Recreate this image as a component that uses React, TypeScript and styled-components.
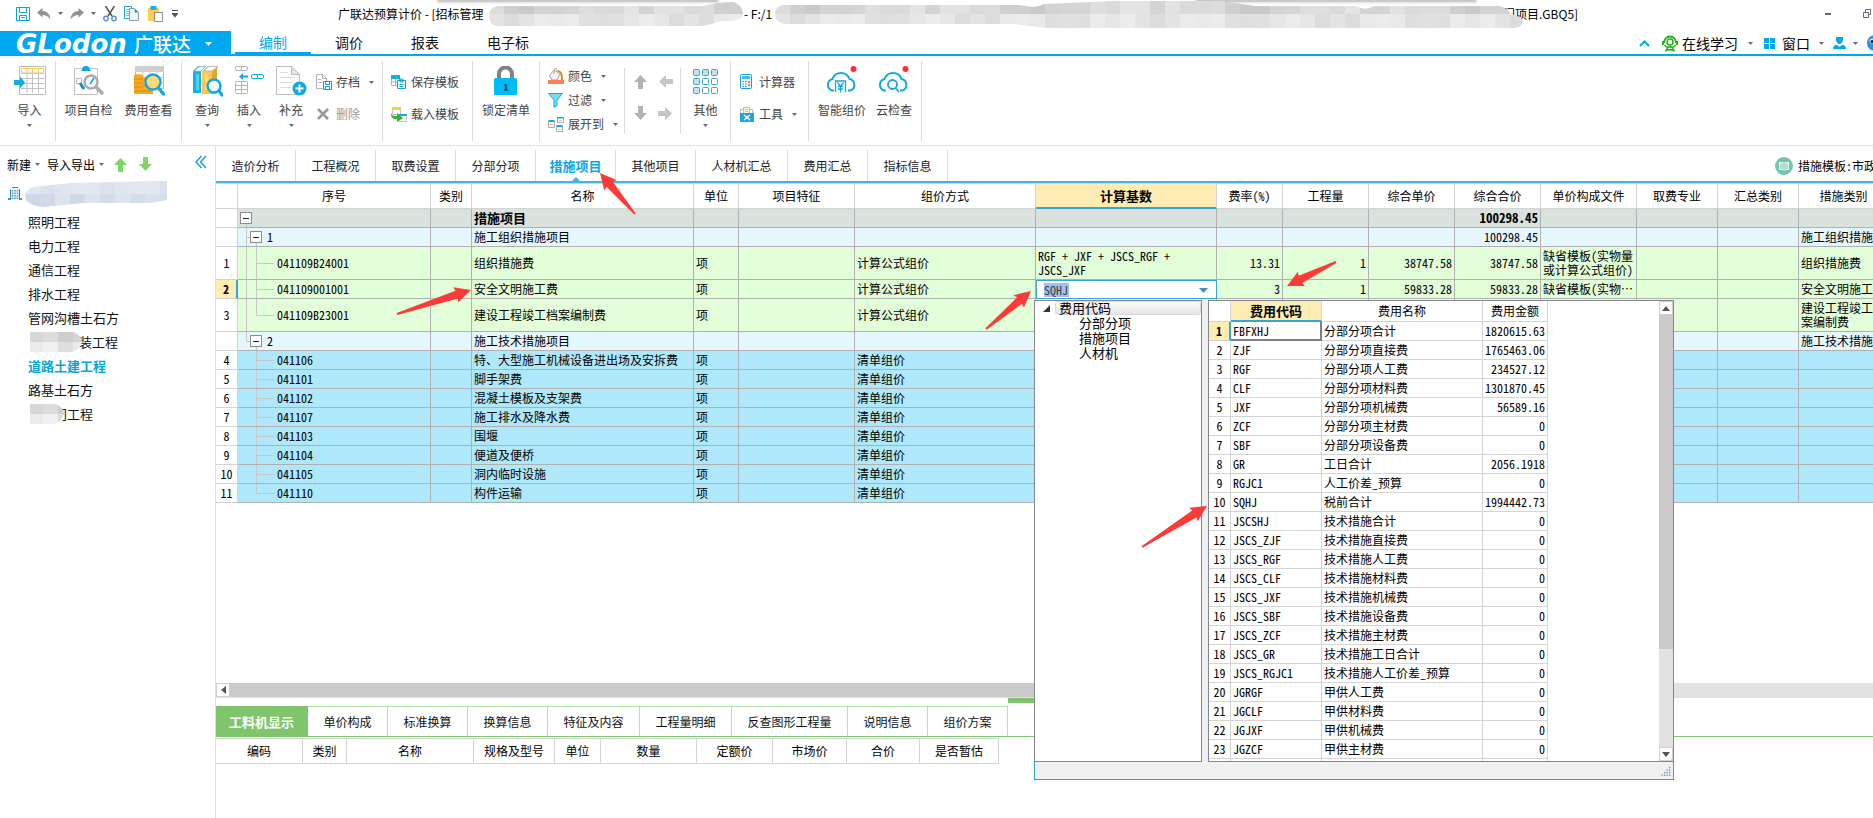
import React from 'react';
import styled, { createGlobalStyle, css } from 'styled-components';

const SANS = '"Noto Sans CJK SC", "Noto Sans", sans-serif';
const MONO = '"Noto Sans Mono CJK SC", "Liberation Mono", "Noto Sans CJK SC", monospace';
const BLUE = '#00a8f0';
const LINE = '#d4d4d4';

const GlobalStyle = createGlobalStyle`
  * { box-sizing: border-box; }
  html, body, #root { height: 100%; margin: 0; }
  body { background: #fff; overflow: hidden; font: 12px/16px ${SANS}; color: #000; }
  button { font: inherit; color: inherit; background: none; border: 0; padding: 0; margin: 0; cursor: pointer; }
  svg { display: block; flex: none; }
`;

const Shell = styled.div`
  position: relative;
  display: flex;
  flex-direction: column;
  min-height: 100vh;
  overflow: hidden;
`;

/* ---------- small drawings ---------- */

const Caret = ({ color = '#6a6a78' }: { color?: string }) => (
  <svg width="5" height="3" viewBox="0 0 5 3"><path d="M0 0h5L2.5 3z" fill={color} /></svg>
);

const SaveIcon = () => (
  <svg width="14" height="14" viewBox="0 0 14 14" fill="none" stroke="#0aa6d6">
    <path d="M.5.5h13v13H.5z" /><path d="M3.500.500v5h7v-5" /><path d="M3.500 13.500v-5h7v5M5 10.500h4" />
  </svg>
);
const UndoIcon = ({ flip }: { flip?: boolean }) => (
  <svg width="14" height="12" viewBox="0 0 14 12"><path transform={flip ? 'translate(14 0) scale(-1 1)' : undefined} d="M0 4.500 5.500 0v3C10 3 13 6 13.500 11.500 11.500 8.500 9 7 5.500 7v2.500z" fill="#8e9196" /></svg>
);
const CutIcon = () => (
  <svg width="14" height="16" viewBox="0 0 14 16" fill="none">
    <path d="M2.500 0 9 10M11.500 0 5 10" stroke="#55585e" strokeWidth="1.600" />
    <circle cx="3" cy="12.500" r="2.200" stroke="#5c8fc0" strokeWidth="1.400" /><circle cx="11" cy="12.500" r="2.200" stroke="#5c8fc0" strokeWidth="1.400" />
  </svg>
);
const CopyIcon = () => (
  <svg width="15" height="15" viewBox="0 0 15 15" fill="none">
    <path d="M.5.500h7v12h-7z" fill="#fff" stroke="#1aa6d4" /><path d="M2 3.500h4M2 5.500h3M2 7.500h3M2 9.500h3" stroke="#aaa" />
    <path d="M5.500 2.500h5l4 4v8h-9z" fill="#eef9fd" stroke="#9a9a9a" /><path d="M10.500 2.500v4h4z" fill="#1aa6d4" />
  </svg>
);
const PasteIcon = () => (
  <svg width="15" height="16" viewBox="0 0 15 16"><path d="M0 2h11v13H0z" fill="#ffcc4d" /><path d="M2.500 0h6v4h-6z" fill="#16b0dc" /><path d="M6.500 6.500h8v9h-8z" fill="#fff" stroke="#8b8b8b" /></svg>
);
const MenuMoreIcon = () => (
  <svg width="6" height="8" viewBox="0 0 6 8"><path d="M0 .500h6" stroke="#555" /><path d="M0 3h6v1L3 7.500 0 4z" fill="#555" /></svg>
);

const ImportIcon = () => (
  <svg width="32" height="29" viewBox="0 0 32 29" fill="none">
    <path d="M5.500.500h26v28h-26z" fill="#fff" stroke="#bbb" />
    <path d="M7 7h23M7 12.500h23M7 17.500h23M7 22.500h23M13 7v20M18.500 7v20M24.500 7v20" stroke="#c2c2c2" />
    <path d="M7.500 2.500h22v5h-22zM13 2.500v5M18.500 2.500v5M24.500 2.500v5" stroke="#ffc84a" />
    <path d="M0 14h6v-3.500l5 6-5 6V19H0z" fill="#13a9e0" />
  </svg>
);
const InspectIcon = () => (
  <svg width="32" height="30" viewBox="0 0 32 30" fill="none">
    <path d="M1.500 2.500h23v26h-23z" fill="#fff" stroke="#c2c2c2" /><path d="M9 4a4 4 0 0 1 8 0zM8 4h10v1H8z" fill="#13a9e0" />
    <path d="M3.500 12.500h5v5h-5z" stroke="#bbb" /><path d="m7 17 4 6" stroke="#1b8cc8" strokeWidth="3" />
    <circle cx="18" cy="16" r="6.500" fill="#f4f8fa" stroke="#a9abae" strokeWidth="2.400" /><path d="m23 21 6 6" stroke="#a9abae" strokeWidth="3.500" strokeLinecap="round" /><path d="m17 18 4-6" stroke="#13a9e0" strokeWidth="1.500" />
  </svg>
);
const CostIcon = () => (
  <svg width="32" height="30" viewBox="0 0 32 30" fill="none">
    <path d="M2.500.500h28v22h-28z" fill="#fff" stroke="#bbb" /><path d="M2 0h29v6H2z" fill="#cfcfcf" /><path d="M3 11.500h27M3 17h27M10 6v17M17 6v17M24 6v17" stroke="#c9c9c9" />
    <path d="M1 9c0-1 8-1 9 0v2h6l4 12v5H1z" fill="#f7a922" /><path d="M1 13h9M1 17h9M1 21h9M1 25h18M10 15h6M10 20h7" stroke="#d98a12" />
    <circle cx="20" cy="16" r="7.500" fill="#ffd97a" stroke="#13a9e0" strokeWidth="2.400" /><path d="m25.500 22 5 6" stroke="#13a9e0" strokeWidth="3.500" strokeLinecap="round" />
  </svg>
);
const QueryIcon = () => (
  <svg width="31" height="31" viewBox="0 0 31 31" fill="none">
    <path d="M1 5 6 0h8L9 5v22H1z" fill="#13b4e4" /><path d="M2.500 5 7 .500h6L9 5z" fill="#fff" stroke="#9bb" /><path d="M4 8h3v16H4z" fill="#55cdf0" />
    <path d="M10 5 16 0h10l-1 5v23H10z" fill="#ffc84a" /><path d="M11.500 5 17 .500h9L20 5z" fill="#fff" stroke="#bbb" /><path d="M13 8h3v16h-3z" fill="#ffdd88" /><path d="m20 6 5-4v12l-5 2z" fill="#e6a52d" />
    <circle cx="22" cy="20" r="6.500" fill="#f5fafc" stroke="#13a9e0" strokeWidth="2.400" /><path d="m27 25 3 4" stroke="#13a9e0" strokeWidth="3.200" strokeLinecap="round" />
  </svg>
);
const InsertIcon = () => (
  <svg width="29" height="29" viewBox="0 0 29 29" fill="none">
    <rect x=".5" y=".5" width="12" height="4" rx="1.500" stroke="#b4b4b4" /><path d="M6.500.500v4" stroke="#b4b4b4" />
    <rect x="16.500" y="8.500" width="12" height="4" rx="1.500" stroke="#13a9e0" /><path d="M22.500 8.500v4" stroke="#13a9e0" />
    <path d="M13 9.500H8V7l-4 3.500L8 14v-2.500h5z" fill="#13a9e0" />
    <rect x=".5" y="15.500" width="12" height="12" rx="1" stroke="#b4b4b4" /><path d="M6.500 15.500v12M.500 19.500h12M.500 23.500h12" stroke="#b4b4b4" />
  </svg>
);
const SupplementIcon = () => (
  <svg width="31" height="30" viewBox="0 0 31 30" fill="none">
    <path d="M.500.500h15l8 8v20H.500z" fill="#fff" stroke="#bcbcbc" /><path d="M15.500.500v8h8z" fill="#e4e4e4" stroke="#bcbcbc" /><path d="M4 6.500h8M4 11.500h15M4 16.500h13M4 21.500h11" stroke="#dcdcdc" />
    <circle cx="23.500" cy="22.500" r="7" fill="#13a9e0" /><path d="M23.500 18.500v8M19.500 22.500h8" stroke="#fff" strokeWidth="2" />
  </svg>
);
const ArchiveIcon = () => (
  <svg width="16" height="16" viewBox="0 0 16 16" fill="none">
    <path d="M.500.500h6l4 4v10H.500z" fill="#fff" stroke="#b4b4b4" /><path d="M6.500.500v4h4M2 5.500h3M2 8.500h4" stroke="#b4b4b4" />
    <path d="M7.500 7.500h8v8h-8z" fill="#fff" stroke="#0ea0d0" /><path d="M9.500 7.500v3h4v-3M9.500 15.500v-3h4v3" stroke="#0ea0d0" />
  </svg>
);
const DeleteIcon = () => (
  <svg width="14" height="12" viewBox="0 0 14 12"><path d="m2 1 10 10M12 1 2 11" stroke="#9b9b9b" strokeWidth="2.600" /></svg>
);
const SaveTplIcon = () => (
  <svg width="15" height="14" viewBox="0 0 15 14" fill="none">
    <path d="M.500.500h8v10h-8zM4.500 3v8M.500 7h8" stroke="#b4b4b4" /><path d="M0 0h9v4H0z" fill="#13b0e0" /><path d="M6.500 5.500h8v8h-8z" fill="#fff" stroke="#0ea0d0" /><path d="M9 4h3v3H9zM8.500 9.500h4M8.500 11.500h4" stroke="#0ea0d0" />
  </svg>
);
const LoadTplIcon = () => (
  <svg width="16" height="15" viewBox="0 0 16 15" fill="none">
    <path d="M1.500.500h8v7h-8z" fill="#fff" stroke="#c4c4c4" /><path d="M1 0h9v3H1z" fill="#ffc84a" /><path d="M7.500 7.500h8v7h-8z" fill="#fff" stroke="#c4c4c4" /><path d="M7 7h9v2H7z" fill="#13a9e0" />
    <path d="M0 5C0 9 3 9 6 9V6l6 5-6 4v-2.500C1 12.500-.500 10 0 5z" fill="#3cb034" />
  </svg>
);
const LockIcon = () => (
  <svg width="24" height="29" viewBox="0 0 24 29" fill="none">
    <path d="M5 13V8a6.500 6.500 0 0 1 13 0v5" stroke="#808088" strokeWidth="4" /><rect x="0" y="12" width="23" height="17" rx="1.500" fill="#00bbf4" /><path d="M10 18h3v5h1v2h-4v-2h1v-3h-1z" fill="#1a5f86" />
  </svg>
);
const ColorIcon = () => (
  <svg width="16" height="16" viewBox="0 0 16 16" fill="none"><path d="m6 2 6 4-3 6H4L1.500 7.500z" fill="#f7f7f7" stroke="#a2a2a2" /><path d="M6 6V1.500C6 0 9 0 9 1.500V4" stroke="#a2a2a2" /><path d="M10 3c3 0 4 3 4 9" stroke="#e8891f" strokeWidth="2" /><path d="M0 12h16v4H0z" fill="#ff7f50" /></svg>
);
const FilterIcon = () => (
  <svg width="15" height="15" viewBox="0 0 15 15"><path d="M.500.500h14L9 7v5.500L6 14.500V7z" fill="#7fd6f5" stroke="#13a9e0" /></svg>
);
const ExpandIcon = () => (
  <svg width="16" height="15" viewBox="0 0 16 15" fill="none"><path d="M.500 4.500h6v6h-6zM9.500.500h6v5h-6zM8.500 9.500h6v5h-6z" fill="#fff" stroke="#aaa" /><path d="M.500 4h6M9.500.500h6M8.500 9h6" stroke="#13a9e0" strokeWidth="2" /><path d="M2 7.500h3M11 3.500h3M10 12.500h3" stroke="#e4c48a" /></svg>
);
const dirs = { up: 0, right: 90, down: 180, left: 270 };
const ArrowIcon = ({ dir, color = '#b4b4b4' }: { dir: keyof typeof dirs; color?: string }) => (
  <svg width="15" height="15" viewBox="0 0 15 15"><path transform={`rotate(${dirs[dir]} 7.5 7.5)`} d="M7.500 1 14 8h-4v7H5V8H1z" fill={color} /></svg>
);
const OtherIcon = () => (
  <svg width="25" height="28" viewBox="0 -3 25 28" stroke="#35a3cf">
    {[0, 1, 2].map(r => [0, 1, 2].map(c => (
      <rect key={`${r}${c}`} x={c * 9 + 0.5} y={r * 9 + 0.5} width="6" height="6" rx="1" fill={r === 0 || c === 0 ? '#c2e2f4' : '#fff'} />
    )))}
  </svg>
);
const CalcIcon = () => (
  <svg width="13" height="16" viewBox="0 0 13 16" fill="none"><rect x=".5" y=".5" width="11" height="14" rx="1" fill="#e8f6fc" stroke="#1f9ad6" /><path d="M2 2h8v3H2z" fill="#49b8ea" /><path d="M2.500 7.500h5M2.500 10h5M2.500 12.500h5" stroke="#1f9ad6" strokeDasharray="1.500 1" /><path d="M9 7v6" stroke="#ee5544" strokeWidth="1.500" strokeDasharray="2 1" /></svg>
);
const ToolIcon = () => (
  <svg width="14" height="15" viewBox="0 0 14 15" fill="none"><path d="M.500 2.500h12v5h-12z" fill="#fff" stroke="#bbb" /><path d="M3.500.500h6v6h-6z" fill="#fff6d8" stroke="#f0b93a" /><path d="M5 2.500h3M5 4.500h3" stroke="#f0b93a" /><path d="M0 6h14v9H0z" fill="#1fa3e4" /><path d="m4 8 6 5M10 8l-6 5" stroke="#fff" strokeWidth="1.500" /></svg>
);
const CloudIcon = ({ search }: { search?: boolean }) => (
  <svg width="33" height="30" viewBox="0 0 33 30" fill="none">
    <path d="M8 24.500H6A6 6 0 0 1 6.500 13 9 9 0 0 1 23.500 13 6 6 0 0 1 24.500 24.500H22" stroke="#13a9e0" strokeWidth="2" />
    {search ? (
      <g stroke="#13a9e0" strokeWidth="1.800"><circle cx="14.500" cy="18.500" r="4.500" /><path d="m17.500 22 3.500 4" /></g>
    ) : (
      <g stroke="#13a9e0" strokeWidth="1.300"><path d="M9.500 26v-11h10v11" /><path d="m11.500 16.500 3 4 3-4M14.500 20.500v6M12 20.500h5M12 23h5" /></g>
    )}
    <circle cx="27.500" cy="3" r="3" fill="#ff2d2d" />
  </svg>
);
const HeadsetIcon = () => (
  <svg width="16" height="17" viewBox="0 0 16 17" fill="none" stroke="#22b11a"><path d="M2 8a6 6.500 0 0 1 12 0" strokeWidth="1.800" /><path d="M1 6v4M15 6v4" strokeWidth="2" /><circle cx="8" cy="7" r="3" strokeWidth="1.500" /><path d="M2.500 10c1 2 3 3 5.500 1.500 2.500 1.500 4.500.500 5.500-1.500M6 12l-2 3.500 4-1 4 1-2-3.500" strokeWidth="1.500" /></svg>
);
const WindowsIcon = () => (
  <svg width="11" height="11" viewBox="0 0 11 11"><path d="M0 0h5v5H0zM6 0h5v5H6zM0 6h5v5H0zM6 6h5v5H6z" fill={BLUE} /></svg>
);
const UserIcon = () => (
  <svg width="13" height="12" viewBox="0 0 13 12" fill={BLUE}><path d="M3 0h7v3c0 2-2 4-3.500 4S3 5 3 3z" /><path d="M0 12c0-4 3-4 4-4l2.500 2L9 8c1 0 4 0 4 4z" /></svg>
);
const BirdIcon = () => (
  <svg width="16" height="16" viewBox="0 0 16 16"><circle cx="8" cy="8" r="8" fill="#2f8fe0" /><circle cx="5" cy="6" r="2.500" fill="#cfe8fa" /><circle cx="5" cy="6.500" r="1.500" fill="#222" /><path d="m8 8 4 2-3 3z" fill="#ffc23c" /></svg>
);
const BookIcon = () => (
  <svg width="18" height="18" viewBox="0 0 18 18"><circle cx="9" cy="9" r="9" fill="#74c5b0" /><path d="M4 5h4l1 1 1-1h4v8h-4l-1 1-1-1H4z" fill="#e9f7f3" /><path d="M5 7h3M5 9h3M5 11h3M10 7h3M10 9h3M10 11h3M9 6v7" stroke="#74c5b0" /></svg>
);
const BuildingIcon = () => (
  <svg width="14" height="14" viewBox="0 0 14 14" fill="none">
    <path d="M4 .500h6M2.500 13V2.500h9V13" stroke="#3d7fb4" /><path d="M3 2h8v11H3z" fill="#eaf6fd" />
    <path d="M4.500 3v9M7 3v9M9.500 3v9" stroke="#39a0dc" strokeWidth="1.500" strokeDasharray="1.500 1" /><path d="M0 11h2v2H0zM12 11h2v2h-2z" fill="#4cae3a" />
  </svg>
);
const CollapseIcon = () => (
  <svg width="12" height="14" viewBox="0 0 12 14" fill="none" stroke="#16a0c8" strokeWidth="1.400"><path d="M6.500 1 1 7l5.500 6M11 1 5.500 7l5.500 6" /></svg>
);

/* ---------- title bar ---------- */

const TitleBar = styled.header`
  display: flex;
  align-items: center;
  height: 31px;
  padding: 0 2px 4px 16px;
`;
const QuickAccess = styled.div`
  display: flex;
  align-items: center;
  width: 322px;
  gap: 7px;
`;
const IconButton = styled.button<{ $ml?: number }>`
  margin-left: ${p => p.$ml ?? 0}px;
`;
const TitleText = styled.div<{ $w?: number }>`
  width: ${p => (p.$w ? `${p.$w}px` : 'auto')};
  flex: none;
  white-space: nowrap;
`;
const WindowControls = styled.div`
  display: flex;
  align-items: center;
  gap: 32px;
  margin-left: auto;
`;
const Redaction = styled.svg<{ $pull?: number }>`
  position: relative;
  z-index: 1;
  margin-right: ${p => -(p.$pull ?? 0)}px;
`;
const TopShade = styled.div`
  position: absolute;
  top: 0;
  left: 0;
  right: 0;
  display: flex;
  gap: 478px;
  padding-left: 438px;
`;
const Shade = styled.span`
  width: 280px;
  height: 2px;
  background: #c9c9c9;
  box-shadow: 0 0 3px 1px #dcdcdc;
`;

const TONES = ['#dcdcdc', '#d2d3d4', '#dadada', '#e2e2e2', '#cfcfd1', '#d6d4d4', '#e4e4e6', '#d9dbdb', '#c9c9cb', '#dedede', '#d4d4d6'];
const PALE = ['#e3e3e4', '#ebebeb', '#dfe0e0', '#e6e6e6', '#dbdcdd', '#e9e9ea', '#e0dfde', '#ececec'];
const BLUES = ['#e0e7f0', '#e6ebf3', '#dfe6f0', '#d8e0ec', '#dbe2ee', '#e4e9f2'];
const BLUES_LOW = ['#cdd8e6', '#d8e1ec', '#d3dce9', '#dde4ee', '#cfd9e8'];

function Mosaic({ id, w, h, shape, pull, tones = TONES, pale = PALE }: { id: string; w: number; h: number; shape: string; pull?: number; tones?: string[]; pale?: string[] }) {
  const cols = Math.ceil(w / 15);
  return (
    <Redaction $pull={pull} width={w} height={h} viewBox={`0 0 ${w} ${h}`} aria-hidden="true">
      <clipPath id={id}><path d={shape} /></clipPath>
      <g clipPath={`url(#${id})`}>
        {Array.from({ length: cols }, (_, i) => (
          <React.Fragment key={i}>
            <rect x={i * 15} y="0" width="15" height={h / 2} fill={tones[(i * 3 + (i % 4)) % tones.length]} />
            <rect x={i * 15} y={h / 2} width="15" height={h / 2} fill={pale[(i * 3 + (i % 3)) % pale.length]} />
          </React.Fragment>
        ))}
      </g>
    </Redaction>
  );
}

/* ---------- main menu ---------- */

const MenuBar = styled.nav`
  display: flex;
  height: 25px;
  border-bottom: 2px solid ${BLUE};
`;
const Brand = styled.button`
  display: flex;
  align-items: center;
  width: 231px;
  height: 25px;
  padding-left: 16px;
  margin-right: 4px;
  background: ${BLUE};
  color: #fff;
`;
const BrandLatin = styled.span`
  font: italic bold 26px/24px "DejaVu Sans", sans-serif;
  width: 118px;
  text-align: left;
`;
const BrandName = styled.span`
  font-size: 19px;
  line-height: 24px;
  font-weight: 500;
  margin-right: 14px;
`;
const MenuTab = styled.button<{ $active?: boolean; $w: number }>`
  width: ${p => p.$w}px;
  height: 25px;
  padding-bottom: ${p => (p.$active ? 0 : 4)}px;
  font-size: 14px;
  color: ${p => (p.$active ? BLUE : '#111')};
  border-bottom: ${p => (p.$active ? `4px solid ${BLUE}` : '0')};
`;
const MenuRight = styled.div`
  display: flex;
  align-items: center;
  width: 234px;
  height: 24px;
  margin-left: auto;
  overflow: hidden;
  white-space: nowrap;
  font-size: 14px;
`;
const MenuLink = styled.button<{ $mr: number; $gap?: number }>`
  display: flex;
  flex: none;
  align-items: center;
  gap: ${p => p.$gap ?? 4}px;
  margin-right: ${p => p.$mr}px;
`;

/* ---------- ribbon ---------- */

const Ribbon = styled.div`
  display: flex;
  height: 90px;
  padding: 5px 0 4px;
  border-bottom: 1px solid #dedede;
  color: #444;
`;
const Group = styled.div<{ $w: number; $short?: boolean; $start?: number }>`
  display: flex;
  flex: none;
  justify-content: ${p => (p.$start !== undefined ? 'flex-start' : 'center')};
  padding-left: ${p => p.$start ?? 0}px;
  width: ${p => p.$w}px;
  margin: ${p => (p.$short ? '7px 0' : '0')};
  border-right: 1px solid #dcdcdc;
`;
const BigTool = styled.button<{ $w: number }>`
  display: flex;
  flex-direction: column;
  align-items: center;
  flex: none;
  width: ${p => p.$w}px;
  height: 70px;
  padding-top: 5px;
  white-space: nowrap;
`;
const BigArt = styled.span`
  display: flex;
  align-items: flex-start;
  height: 36px;
`;
const BigLabel = styled.span`
  height: 22px;
`;
const SmallColumn = styled.div<{ $gap: number; $pt: number; $ml?: number }>`
  display: flex;
  flex-direction: column;
  align-items: flex-start;
  gap: ${p => p.$gap}px;
  padding-top: ${p => p.$pt}px;
  margin-left: ${p => p.$ml ?? 0}px;
`;
const SmallTool = styled.button<{ $muted?: boolean }>`
  display: flex;
  align-items: center;
  height: 16px;
  white-space: nowrap;
  color: ${p => (p.$muted ? '#9a9a9a' : '#444')};
`;
const SmallArt = styled.span<{ $w?: number }>`
  display: flex;
  width: ${p => p.$w ?? 20}px;
`;
const SmallLabel = styled.span`
  margin-right: 9px;
`;
const ArrowPad = styled.div`
  display: grid;
  grid-template-columns: 25px 15px;
  grid-auto-rows: 15px;
  row-gap: 17px;
  padding-top: 6px;
`;

interface BigProps { icon: React.ReactNode; label: string; w?: number; menu?: boolean }
const Big = ({ icon, label, w = 60, menu }: BigProps) => (
  <BigTool $w={w}>
    <BigArt>{icon}</BigArt>
    <BigLabel>{label}</BigLabel>
    {menu && <Caret />}
  </BigTool>
);
interface SmallProps { icon: React.ReactNode; label: string; menu?: boolean; muted?: boolean; artW?: number }
const Small = ({ icon, label, menu, muted, artW }: SmallProps) => (
  <SmallTool $muted={muted}>
    <SmallArt $w={artW}>{icon}</SmallArt>
    <SmallLabel>{label}</SmallLabel>
    {menu && <Caret />}
  </SmallTool>
);

/* ---------- body ---------- */

const Body = styled.div`
  display: flex;
  flex: 1;
  min-height: 0;
`;
const Sidebar = styled.aside`
  width: 216px;
  flex: none;
  border-right: 1px solid #dedede;
`;
const SideTools = styled.div`
  display: flex;
  align-items: center;
  height: 32px;
  padding: 5px 8px 0 7px;
`;
const SideButton = styled.button<{ $mr: number }>`
  display: flex;
  align-items: center;
  gap: 4px;
  margin-right: ${p => p.$mr}px;
`;
const CollapseButton = styled.button`
  margin: -6px 0 0 auto;
`;
const ProjectRoot = styled.button`
  display: flex;
  align-items: center;
  gap: 3px;
  height: 32px;
  padding-left: 8px;
`;
const ProjectItem = styled.button<{ $active?: boolean }>`
  display: flex;
  align-items: center;
  width: 100%;
  height: 24px;
  padding-left: 28px;
  font-size: 13px;
  line-height: 24px;
  font-weight: ${p => (p.$active ? 700 : 400)};
  color: ${p => (p.$active ? '#0aa4de' : '#111')};
  white-space: nowrap;
`;

const Main = styled.main`
  display: flex;
  flex-direction: column;
  flex: 1;
  min-width: 0;
`;
const ViewTabs = styled.div`
  display: flex;
  align-items: center;
  height: 37px;
  padding-top: 4px;
  border-bottom: 2px solid #44b4e4;
`;
const ViewTab = styled.button<{ $active?: boolean; $w: number }>`
  position: relative;
  flex: none;
  width: ${p => p.$w}px;
  height: 31px;
  color: #222;
  border-right: 1px solid #dcdcdc;
  ${p => p.$active && css`
    color: #0ea4ea;
    font-size: 13px;
    font-weight: 700;
    &::after {
      content: '';
      position: absolute;
      left: 50%;
      bottom: 0;
      margin-left: -4px;
      border: 4px solid transparent;
      border-top: 0;
      border-bottom-color: #44b4e4;
    }
  `}
`;
const TemplateInfo = styled.div`
  display: flex;
  align-items: center;
  gap: 5px;
  width: 98px;
  margin-left: auto;
  overflow: hidden;
  white-space: nowrap;
  font-family: ${MONO};
`;

const GridArea = styled.section`
  flex: 1;
  min-height: 0;
  overflow: hidden;
`;
const Grid = styled.table`
  table-layout: fixed;
  border-collapse: separate;
  border-spacing: 0;
  font-family: ${MONO};
  line-height: 14px;
`;
const headCell = css`
  padding: 0;
  font-weight: 400;
  text-align: center;
  border-right: 1px solid ${LINE};
  border-bottom: 1px solid ${LINE};
  white-space: nowrap;
`;
const Th = styled.th<{ $hot?: boolean }>`
  ${headCell}
  height: 26px;
  border-top: 1px solid ${LINE};
  ${p => p.$hot && css`
    background: #ffecb2;
    font-weight: 700;
    font-size: 13px;
    border-bottom: 2px solid #35a6d4;
  `}
`;
const rowFill = { root: '#d9e2dd', group: '#e5f6fd', formula: '#e2fed8', list: '#aee8fa' };
const Tr = styled.tr<{ $kind: keyof typeof rowFill; $tall?: boolean }>`
  height: ${p => (p.$tall ? 33 : 19)}px;
  background-color: ${p => rowFill[p.$kind]};
  font-weight: ${p => (p.$kind === 'root' ? 700 : 400)};
  font-size: ${p => (p.$kind === 'root' ? 13 : 12)}px;
`;
const Td = styled.td<{ $num?: boolean; $clip?: boolean }>`
  padding: 0 2px;
  border-right: 1px solid #b0b0b0;
  border-bottom: 1px solid #b0b0b0;
  text-align: ${p => (p.$num ? 'right' : 'left')};
  overflow: hidden;
  white-space: ${p => (p.$clip ? 'nowrap' : 'pre-line')};
`;
const RowNo = styled.th<{ $hot?: boolean }>`
  padding: 0;
  font: ${p => (p.$hot ? 700 : 400)} 12px/14px ${MONO};
  background: ${p => (p.$hot ? '#ffecb2' : '#fff')};
  border-right: ${p => (p.$hot ? '2px solid #35a6d4' : `1px solid ${LINE}`)};
  border-bottom: 1px solid ${LINE};
`;
type Guide = { x: number; part: 'full' | 'top' | 'bottom' } | { x: number; to: number };
const guideImage = 'linear-gradient(#c8c8c8, #c8c8c8)';
const TreeTd = styled(Td)<{ $guides: Guide[]; $pad: number }>`
  padding-left: ${p => p.$pad}px;
  background-repeat: no-repeat;
  background-image: ${p => p.$guides.map(() => guideImage).join(',') || 'none'};
  background-size: ${p => p.$guides.map(g => ('to' in g ? `${g.to - g.x}px 1px` : `1px ${g.part === 'full' ? '100%' : '50%'}`)).join(',') || 'auto'};
  background-position: ${p => p.$guides.map(g => ('to' in g ? `${g.x}px 50%` : `${g.x}px ${g.part === 'bottom' ? '100%' : '0'}`)).join(',') || '0 0'};
`;
const Node = styled.span`
  display: flex;
  align-items: center;
  gap: 5px;
`;
const Toggle = styled.button`
  width: 12px;
  height: 12px;
  border: 1px solid #8c8c8c;
  background: linear-gradient(#222, #222) center / 6px 1px no-repeat #fff;
`;
const ComboTd = styled.td`
  padding: 0;
  background: #fff;
  border: 1px solid #35a6d4;
`;
const Combo = styled.div`
  display: flex;
  align-items: center;
  justify-content: space-between;
  padding: 1px 8px 0 7px;
`;
const ComboInput = styled.input`
  width: 25px;
  height: 14px;
  padding: 0;
  border: 0;
  outline: 0;
  background: #a0bfec;
  color: #3c4048;
  font: 12px/14px ${MONO};
`;

const HScroll = styled.div`
  display: flex;
  flex: none;
  height: 15px;
  background: #e2e2e2;
  border-bottom: 1px solid #e0e0e0;
`;
const ScrollButton = styled.button`
  display: flex;
  align-items: center;
  justify-content: center;
  width: 14px;
  height: 14px;
  background: #fff;
  border: 1px solid #cfcfcf;
`;
const HThumb = styled.div`
  width: 60%;
  background: #cacaca;
`;
const Splitter = styled.div`
  display: flex;
  justify-content: center;
  height: 8px;
`;
const SplitterGrip = styled.span`
  width: 74px;
  height: 5px;
  background: #80c56c;
`;
const LowerPanel = styled.section`
  flex: none;
  height: 112px;
`;
const LowerTabs = styled.div`
  display: flex;
  height: 31px;
  border-bottom: 1px solid #80c56c;
`;
const LowerTab = styled.button<{ $active?: boolean; $w: number }>`
  width: ${p => p.$w}px;
  color: ${p => (p.$active ? '#fff' : '#111')};
  font-size: ${p => (p.$active ? 13 : 12)}px;
  font-weight: ${p => (p.$active ? 700 : 400)};
  background: ${p => (p.$active ? '#80c56c' : '#fff')};
  border-top: 1px solid ${p => (p.$active ? '#80c56c' : '#b2e6a4')};
  border-right: 1px solid ${p => (p.$active ? '#80c56c' : '#b2e6a4')};
`;
const LowerGrid = styled(Grid)`
  margin-top: 1px;
`;

/* ---------- fee code popup ---------- */

const Popup = styled.div`
  position: absolute;
  left: 1034px;
  top: 300px;
  display: grid;
  grid-template-columns: 168px 1fr;
  grid-template-rows: 462px 18px;
  column-gap: 6px;
  width: 640px;
  background: #f0f0f0;
`;
const PopupTree = styled.div`
  background: #fff;
  border: 1px solid #828790;
  font-size: 13px;
  line-height: 15px;
`;
const TreeHead = styled.button`
  display: flex;
  align-items: center;
  gap: 5px;
  width: 100%;
  height: 14px;
  padding-left: 8px;
`;
const TreeHeadLabel = styled.span`
  flex: 1;
  height: 14px;
  padding-left: 3px;
  text-align: left;
  line-height: 12px;
  border: 1px solid #d9d9d9;
  border-radius: 3px;
  background: linear-gradient(#fafafa, #e5e5e5);
`;
const TreeLeaf = styled.button`
  display: block;
  width: 100%;
  padding-left: 44px;
  text-align: left;
`;
const PopupList = styled.div`
  display: flex;
  justify-content: space-between;
  background: #fff;
  border: 1px solid #828790;
  overflow: hidden;
`;
const FeeTable = styled(Grid)`
  align-self: flex-start;
`;
const FeeTh = styled(Th)`
  height: 21px;
  border-top: 0;
`;
const FeeTr = styled.tr`
  height: 19px;
`;
const FeeTd = styled.td<{ $num?: boolean; $focus?: boolean }>`
  padding: 0 2px;
  white-space: nowrap;
  text-align: ${p => (p.$num ? 'right' : 'left')};
  border-right: 1px solid ${LINE};
  border-bottom: 1px solid ${LINE};
  ${p => p.$focus && css`
    border-right: 2px solid #7f7f7f;
    border-bottom: 2px solid #7f7f7f;
  `}
`;
const VScroll = styled.div`
  display: flex;
  flex-direction: column;
  justify-content: space-between;
  width: 14px;
  background: #e2e2e2;
`;
const VThumb = styled.div`
  flex: 1;
  max-height: 334px;
  margin-bottom: auto;
  background: #cacaca;
`;
const PopupStatus = styled.div`
  grid-column: 1 / -1;
  display: flex;
  justify-content: flex-end;
  align-items: flex-end;
  padding: 2px;
  border: 1px solid #35a0cc;
  border-top: 0;
  background: #f0f0f0;
`;

const Annotations = styled.svg`
  position: absolute;
  left: 0;
  top: 0;
  pointer-events: none;
`;

/* ---------- data ---------- */

const columns: [string, number][] = [
  ['', 22], ['序号', 193], ['类别', 41], ['名称', 222], ['单位', 45], ['项目特征', 116], ['组价方式', 181],
  ['计算基数', 181], ['费率(%)', 66], ['工程量', 86], ['综合单价', 86], ['综合合价', 86],
  ['单价构成文件', 96], ['取费专业', 81], ['汇总类别', 81], ['措施类别', 90],
];

interface Row {
  no?: string; kind: keyof typeof rowFill; code?: string; name: string; unit?: string; method?: string; base?: string;
  rate?: string; qty?: string; price?: string; total?: string; file?: string; cat?: string; tall?: boolean; last?: boolean;
}
const list = (no: string, code: string, name: string, last = false): Row => ({ no, kind: 'list', code, name, unit: '项', method: '清单组价', last });
const rows: Row[] = [
  { kind: 'root', name: '措施项目', total: '100298.45' },
  { kind: 'group', code: '1', name: '施工组织措施项目', total: '100298.45', cat: '施工组织措施项目' },
  { no: '1', kind: 'formula', code: '041109B24001', name: '组织措施费', unit: '项', method: '计算公式组价', base: 'RGF + JXF + JSCS_RGF +\nJSCS_JXF', rate: '13.31', qty: '1', price: '38747.58', total: '38747.58', file: '缺省模板(实物量\n或计算公式组价)', cat: '组织措施费', tall: true },
  { no: '2', kind: 'formula', code: '041109001001', name: '安全文明施工费', unit: '项', method: '计算公式组价', rate: '3', qty: '1', price: '59833.28', total: '59833.28', file: '缺省模板(实物⋯', cat: '安全文明施工费' },
  { no: '3', kind: 'formula', code: '041109B23001', name: '建设工程竣工档案编制费', unit: '项', method: '计算公式组价', cat: '建设工程竣工档\n案编制费', tall: true, last: true },
  { kind: 'group', code: '2', name: '施工技术措施项目', cat: '施工技术措施项目', last: true },
  list('4', '041106', '特、大型施工机械设备进出场及安拆费'),
  list('5', '041101', '脚手架费'),
  list('6', '041102', '混凝土模板及支架费'),
  list('7', '041107', '施工排水及降水费'),
  list('8', '041103', '围堰'),
  list('9', '041104', '便道及便桥'),
  list('10', '041105', '洞内临时设施'),
  list('11', '041110', '构件运输', true),
];

function guidesFor(r: Row): Guide[] {
  if (r.kind === 'root') return [{ x: 8, part: 'bottom' }];
  if (r.kind === 'group') return [{ x: 8, part: r.last ? 'top' : 'full' }, { x: 8, to: 12 }, { x: 18, part: 'bottom' }];
  const own: Guide[] = [{ x: 18, part: r.last ? 'top' : 'full' }, { x: 18, to: 36 }];
  return r.kind === 'formula' ? [{ x: 8, part: 'full' }, ...own] : own;
}

const fees: [string, string, string][] = [
  ['FBFXHJ', '分部分项合计', '1820615.63'], ['ZJF', '分部分项直接费', '1765463.06'], ['RGF', '分部分项人工费', '234527.12'],
  ['CLF', '分部分项材料费', '1301870.45'], ['JXF', '分部分项机械费', '56589.16'], ['ZCF', '分部分项主材费', '0'],
  ['SBF', '分部分项设备费', '0'], ['GR', '工日合计', '2056.1918'], ['RGJC1', '人工价差_预算', '0'], ['SQHJ', '税前合计', '1994442.73'],
  ['JSCSHJ', '技术措施合计', '0'], ['JSCS_ZJF', '技术措施直接费', '0'], ['JSCS_RGF', '技术措施人工费', '0'], ['JSCS_CLF', '技术措施材料费', '0'],
  ['JSCS_JXF', '技术措施机械费', '0'], ['JSCS_SBF', '技术措施设备费', '0'], ['JSCS_ZCF', '技术措施主材费', '0'], ['JSCS_GR', '技术措施工日合计', '0'],
  ['JSCS_RGJC1', '技术措施人工价差_预算', '0'], ['JGRGF', '甲供人工费', '0'], ['JGCLF', '甲供材料费', '0'], ['JGJXF', '甲供机械费', '0'], ['JGZCF', '甲供主材费', '0'],
];

const viewTabs: [string, number][] = [['造价分析', 80], ['工程概况', 80], ['取费设置', 80], ['分部分项', 80], ['措施项目', 80], ['其他项目', 80], ['人材机汇总', 92], ['费用汇总', 80], ['指标信息', 80]];
const lowerTabs: [string, number][] = [['工料机显示', 92], ['单价构成', 80], ['标准换算', 80], ['换算信息', 80], ['特征及内容', 92], ['工程量明细', 92], ['反查图形工程量', 116], ['说明信息', 80], ['组价方案', 80]];
const lowerCols: [string, number][] = [['编码', 87], ['类别', 44], ['名称', 127], ['规格及型号', 81], ['单位', 46], ['数量', 96], ['定额价', 76], ['市场价', 74], ['合价', 73], ['是否暂估', 79]];
const projects: { name: string; active?: boolean; masked?: number; pull?: number }[] = [
  { name: '照明工程' }, { name: '电力工程' }, { name: '通信工程' }, { name: '排水工程' }, { name: '管网沟槽土石方' },
  { name: '装工程', masked: 54, pull: 3 }, { name: '道路土建工程', active: true }, { name: '路基土石方' }, { name: '门工程', masked: 36, pull: 10 },
];

/* Each pointer runs from its tail to the tip of a barbed head. */
const pointers: [number, number, number, number][] = [
  [600, 173, 635, 214], [471, 290, 397, 314], [1031, 291, 986, 329], [1287, 286, 1336, 262], [1207, 506, 1142, 547],
];
function pointerPath([tx, ty, sx, sy]: [number, number, number, number]) {
  const len = Math.hypot(sx - tx, sy - ty);
  const ux = (sx - tx) / len;
  const uy = (sy - ty) / len;
  const at = (a: number, b: number) => `${(tx + ux * a - uy * b).toFixed(1)} ${(ty + uy * a + ux * b).toFixed(1)}`;
  return `M${at(0, 0)}L${at(16, 8)}L${at(15, 4)}L${at(len, 1)}L${at(len, -1)}L${at(15, -4)}L${at(16, -8)}Z`;
}

export default function App() {
  return (
    <Shell>
      <GlobalStyle />
      <TopShade><Shade /><Shade /></TopShade>
      <TitleBar>
        <QuickAccess>
          <IconButton aria-label="保存"><SaveIcon /></IconButton>
          <IconButton aria-label="撤销"><UndoIcon /></IconButton>
          <Caret />
          <IconButton aria-label="恢复"><UndoIcon flip /></IconButton>
          <Caret />
          <IconButton aria-label="剪切"><CutIcon /></IconButton>
          <IconButton aria-label="复制"><CopyIcon /></IconButton>
          <IconButton aria-label="粘贴" $ml={2}><PasteIcon /></IconButton>
          <IconButton aria-label="更多" $ml={2}><MenuMoreIcon /></IconButton>
        </QuickAccess>
        <TitleText $w={151}>广联达预算计价 - [招标管理</TitleText>
        <Mosaic id="m1" w={255} h={24} shape="M8 4H215Q228 0 245 0Q255 4 254 14Q250 20 232 19Q218 24 210 24H10Q0 24 0 14Q0 6 8 4Z" />
        <TitleText $w={31}>- F:/1</TitleText>
        <Mosaic id="m2" w={748} h={28} pull={20} shape="M8 5H245Q262 9 268 4L340 1H445L480 6H580L590 9L600 6H725Q735 10 735 14Q748 16 748 22Q746 28 738 28H270L240 24H10Q0 22 0 14Q0 7 8 5Z" />
        <TitleText>门项目.GBQ5]</TitleText>
        <WindowControls>
          <IconButton aria-label="最小化"><svg width="6" height="2"><path d="M0 1h6" stroke="#667" strokeWidth="2" /></svg></IconButton>
          <IconButton aria-label="还原"><svg width="8" height="9" fill="none" stroke="#667"><path d="M.5 3.500h5v5h-5zM2.500 3V.5h5v5H6" /></svg></IconButton>
        </WindowControls>
      </TitleBar>

      <MenuBar>
        <Brand>
          <BrandLatin>GLodon</BrandLatin>
          <BrandName>广联达</BrandName>
          <svg width="7" height="4"><path d="M0 0h7L3.500 4z" fill="#fff" /></svg>
        </Brand>
        <MenuTab $active $w={76}>编制</MenuTab>
        <MenuTab $w={76}>调价</MenuTab>
        <MenuTab $w={76}>报表</MenuTab>
        <MenuTab $w={90}>电子标</MenuTab>
        <MenuRight>
          <MenuLink $mr={12} aria-label="收起功能区"><svg width="11" height="7" fill="none"><path d="m1 6 4.500-4.500L10 6" stroke={BLUE} strokeWidth="2" /></svg></MenuLink>
          <MenuLink $mr={10}><HeadsetIcon />在线学习</MenuLink>
          <MenuLink $mr={11} aria-label="在线学习菜单"><Caret /></MenuLink>
          <MenuLink $mr={9} $gap={7}><WindowsIcon />窗口</MenuLink>
          <MenuLink $mr={9} aria-label="窗口菜单"><Caret /></MenuLink>
          <MenuLink $mr={7} aria-label="用户"><UserIcon /></MenuLink>
          <MenuLink $mr={9} aria-label="用户菜单"><Caret /></MenuLink>
          <MenuLink $mr={0} aria-label="助手"><BirdIcon /></MenuLink>
        </MenuRight>
      </MenuBar>

      <Ribbon>
        <Group $w={56} $start={4}><Big icon={<ImportIcon />} label="导入" w={51} menu /></Group>
        <Group $w={126}>
          <Big icon={<InspectIcon />} label="项目自检" />
          <Big icon={<CostIcon />} label="费用查看" />
        </Group>
        <Group $w={201} $start={4}>
          <Big icon={<QueryIcon />} label="查询" w={42} menu />
          <Big icon={<InsertIcon />} label="插入" w={42} menu />
          <Big icon={<SupplementIcon />} label="补充" w={42} menu />
          <SmallColumn $gap={16} $pt={13} $ml={4}>
            <Small icon={<ArchiveIcon />} label="存档" menu />
            <Small icon={<DeleteIcon />} label="删除" muted />
          </SmallColumn>
        </Group>
        <Group $w={90} $start={8}>
          <SmallColumn $gap={16} $pt={13}>
            <Small icon={<SaveTplIcon />} label="保存模板" />
            <Small icon={<LoadTplIcon />} label="载入模板" />
          </SmallColumn>
        </Group>
        <Group $w={67}><Big icon={<LockIcon />} label="锁定清单" /></Group>
        <Group $w={85} $short $start={8}>
          <SmallColumn $gap={8} $pt={0}>
            <Small icon={<ColorIcon />} label="颜色" menu />
            <Small icon={<FilterIcon />} label="过滤" menu />
            <Small icon={<ExpandIcon />} label="展开到" menu />
          </SmallColumn>
        </Group>
        <Group $w={56} $short>
          <ArrowPad>
            <ArrowIcon dir="up" /><ArrowIcon dir="left" color="#c6c6c6" />
            <ArrowIcon dir="down" /><ArrowIcon dir="right" color="#c6c6c6" />
          </ArrowPad>
        </Group>
        <Group $w={50}><Big icon={<OtherIcon />} label="其他" w={49} menu /></Group>
        <Group $w={78} $start={9}>
          <SmallColumn $gap={16} $pt={13}>
            <Small icon={<CalcIcon />} label="计算器" artW={19} />
            <Small icon={<ToolIcon />} label="工具" menu artW={19} />
          </SmallColumn>
        </Group>
        <Group $w={113} $start={4}>
          <Big icon={<CloudIcon />} label="智能组价" w={58} />
          <Big icon={<CloudIcon search />} label="云检查" w={46} />
        </Group>
      </Ribbon>

      <Body>
        <Sidebar>
          <SideTools>
            <SideButton $mr={7}>新建<Caret /></SideButton>
            <SideButton $mr={9}>导入导出<Caret /></SideButton>
            <SideButton $mr={10} aria-label="上移"><ArrowIcon dir="up" color="#7ed66a" /></SideButton>
            <SideButton $mr={0} aria-label="下移"><ArrowIcon dir="down" color="#7ed66a" /></SideButton>
            <CollapseButton aria-label="收起"><CollapseIcon /></CollapseButton>
          </SideTools>
          <ProjectRoot>
            <BuildingIcon />
            <Mosaic id="m3" w={144} h={26} tones={BLUES} pale={BLUES_LOW} shape="M8 6L45 2L130 0H142V19L125 22H60L18 26Q0 24 0 14Q2 8 8 6Z" />
          </ProjectRoot>
          {projects.map((p, i) => (
            <ProjectItem key={p.name} $active={p.active}>
              {p.masked && <Mosaic id={`p${i}`} w={p.masked} h={20} pull={p.pull} shape={`M2 0H${p.masked - 8}Q${p.masked} 4 ${p.masked} 10Q${p.masked - 2} 18 ${p.masked - 10} 20H2Z`} tones={['#d6d6d6', '#dcdcdc', '#cecece']} pale={['#ebebeb', '#f0f0f0', '#dedede']} />}
              {p.name}
            </ProjectItem>
          ))}
        </Sidebar>

        <Main>
          <ViewTabs>
            {viewTabs.map(([name, w]) => <ViewTab key={name} $w={w} $active={name === '措施项目'}>{name}</ViewTab>)}
            <TemplateInfo><BookIcon />措施模板:市政</TemplateInfo>
          </ViewTabs>

          <GridArea>
            <Grid style={{ width: columns.reduce((s, c) => s + c[1], 0) }}>
              <colgroup>{columns.map(([n, w], i) => <col key={n + i} width={w} />)}</colgroup>
              <thead>
                <tr>{columns.map(([n], i) => <Th key={i} $hot={n === '计算基数'}>{n}</Th>)}</tr>
              </thead>
              <tbody>
                {rows.map((r, i) => (
                  <Tr key={i} $kind={r.kind} $tall={r.tall}>
                    <RowNo $hot={r.no === '2'}>{r.no}</RowNo>
                    <TreeTd $guides={guidesFor(r)} $pad={r.kind === 'root' ? 2 : r.kind === 'group' ? 12 : 39}>
                      {r.kind === 'root' || r.kind === 'group' ? <Node><Toggle aria-label="折叠" />{r.code}</Node> : r.code}
                    </TreeTd>
                    <Td />
                    <Td $clip>{r.name}</Td>
                    <Td>{r.unit}</Td>
                    <Td />
                    <Td>{r.method}</Td>
                    {r.no === '2' ? (
                      <ComboTd>
                        <Combo>
                          <ComboInput defaultValue="SQHJ" aria-label="计算基数" />
                          <button aria-label="展开费用代码"><svg width="9" height="5"><path d="M0 0h9L4.500 5z" fill="#3f8fc0" /></svg></button>
                        </Combo>
                      </ComboTd>
                    ) : <Td>{r.base}</Td>}
                    <Td $num>{r.rate}</Td>
                    <Td $num>{r.qty}</Td>
                    <Td $num>{r.price}</Td>
                    <Td $num>{r.total}</Td>
                    <Td>{r.file}</Td>
                    <Td />
                    <Td />
                    <Td $clip={!r.tall}>{r.cat}</Td>
                  </Tr>
                ))}
              </tbody>
            </Grid>
          </GridArea>

          <HScroll>
            <ScrollButton aria-label="向左滚动"><svg width="5" height="8"><path d="M5 0v8L0 4z" fill="#555" /></svg></ScrollButton>
            <HThumb />
          </HScroll>
          <Splitter><SplitterGrip /></Splitter>
          <LowerPanel>
            <LowerTabs>
              {lowerTabs.map(([name, w], i) => <LowerTab key={name} $w={w} $active={i === 0}>{name}</LowerTab>)}
            </LowerTabs>
            <LowerGrid style={{ width: lowerCols.reduce((s, c) => s + c[1], 0) }}>
              <colgroup>{lowerCols.map(([n, w]) => <col key={n} width={w} />)}</colgroup>
              <thead><tr>{lowerCols.map(([n]) => <Th key={n}>{n}</Th>)}</tr></thead>
            </LowerGrid>
          </LowerPanel>
        </Main>
      </Body>

      <Popup>
        <PopupTree>
          <TreeHead>
            <svg width="7" height="7"><path d="M7 0v7H0z" fill="#333" /></svg>
            <TreeHeadLabel>费用代码</TreeHeadLabel>
          </TreeHead>
          <TreeLeaf>分部分项</TreeLeaf>
          <TreeLeaf>措施项目</TreeLeaf>
          <TreeLeaf>人材机</TreeLeaf>
        </PopupTree>
        <PopupList>
          <FeeTable style={{ width: 339 }}>
            <colgroup><col width="22" /><col width="91" /><col width="161" /><col width="65" /></colgroup>
            <thead><tr><FeeTh /><FeeTh $hot>费用代码</FeeTh><FeeTh>费用名称</FeeTh><FeeTh>费用金额</FeeTh></tr></thead>
            <tbody>
              {fees.map(([code, name, amount], i) => (
                <FeeTr key={code}>
                  <RowNo $hot={i === 0}>{i + 1}</RowNo>
                  <FeeTd $focus={i === 0}>{code}</FeeTd>
                  <FeeTd>{name}</FeeTd>
                  <FeeTd $num>{amount}</FeeTd>
                </FeeTr>
              ))}
              <FeeTr><RowNo /><FeeTd /><FeeTd /><FeeTd /></FeeTr>
            </tbody>
          </FeeTable>
          <VScroll>
            <ScrollButton aria-label="向上滚动"><svg width="8" height="5"><path d="M0 5h8L4 0z" fill="#555" /></svg></ScrollButton>
            <VThumb />
            <ScrollButton aria-label="向下滚动"><svg width="8" height="5"><path d="M0 0h8L4 5z" fill="#555" /></svg></ScrollButton>
          </VScroll>
        </PopupList>
        <PopupStatus>
          <svg width="10" height="10" fill="#4b8fc4">
            {[0, 1, 2, 3].map(r => Array.from({ length: r + 1 }, (_, c) => <rect key={`${r}${c}`} x={8 - c * 2.5} y={r * 2.5} width="1.300" height="1.300" />))}
          </svg>
        </PopupStatus>
      </Popup>

      <Annotations width="1400" height="600" aria-hidden="true">
        {pointers.map((p, i) => <path key={i} d={pointerPath(p)} fill="#fb3b38" />)}
      </Annotations>
    </Shell>
  );
}
